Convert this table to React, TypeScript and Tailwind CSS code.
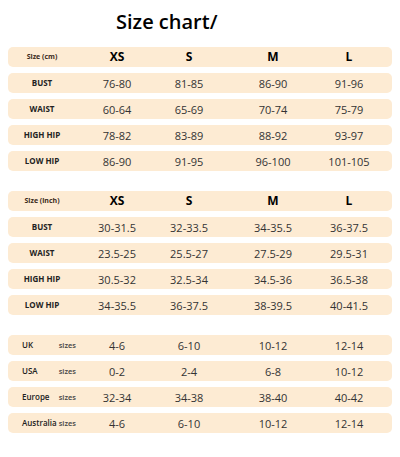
const cols = ['XS', 'S', 'M', 'L']

const cm: [string, string[]][] = [
  ['BUST', ['76-80', '81-85', '86-90', '91-96']],
  ['WAIST', ['60-64', '65-69', '70-74', '75-79']],
  ['HIGH HIP', ['78-82', '83-89', '88-92', '93-97']],
  ['LOW HIP', ['86-90', '91-95', '96-100', '101-105']],
]

const inch: [string, string[]][] = [
  ['BUST', ['30-31.5', '32-33.5', '34-35.5', '36-37.5']],
  ['WAIST', ['23.5-25', '25.5-27', '27.5-29', '29.5-31']],
  ['HIGH HIP', ['30.5-32', '32.5-34', '34.5-36', '36.5-38']],
  ['LOW HIP', ['34-35.5', '36-37.5', '38-39.5', '40-41.5']],
]

const regions: [string, string[]][] = [
  ['UK', ['4-6', '6-10', '10-12', '12-14']],
  ['USA', ['0-2', '2-4', '6-8', '10-12']],
  ['Europe', ['32-34', '34-38', '38-40', '40-42']],
  ['Australia', ['4-6', '6-10', '10-12', '12-14']],
]

const rowCls =
  'grid grid-cols-[68px_82px_62px_106px_46px] items-center h-[20px] rounded-[5px] bg-[#fdebd3]'

function HeaderRow({ unit }: { unit: string }) {
  return (
    <div className={rowCls}>
      <div className="text-center text-[7px] font-bold text-[#3a2a1a] whitespace-nowrap">{unit}</div>
      {cols.map(c => (
        <div key={c} className="text-center text-[12px] font-bold text-black leading-none">
          {c}
        </div>
      ))}
    </div>
  )
}

function ValueCells({ values }: { values: string[] }) {
  return (
    <>
      {values.map((v, i) => (
        <div key={i} className="text-center text-[11px] text-[#333] leading-none whitespace-nowrap">
          {v}
        </div>
      ))}
    </>
  )
}

function MeasureTable({ unit, rows }: { unit: string; rows: [string, string[]][] }) {
  return (
    <div className="flex flex-col gap-[6px]">
      <HeaderRow unit={unit} />
      {rows.map(([label, values]) => (
        <div key={label} className={rowCls}>
          <div className="text-center text-[8px] font-bold text-[#222] whitespace-nowrap">{label}</div>
          <ValueCells values={values} />
        </div>
      ))}
    </div>
  )
}

export default function App() {
  return (
    <div
      className="w-[400px] h-[457px] bg-white px-[8px] overflow-hidden"
      style={{ fontFamily: '"Open Sans", "Liberation Sans", sans-serif' }}
    >
      {/* Title */}
      <div className="pt-[8px] pl-[108px] h-[36px] text-[20px] leading-[28px] font-semibold text-black">
        Size chart/
      </div>

      <div className="mt-[11px] w-[384px]">
        <MeasureTable unit="Size (cm)" rows={cm} />

        <div className="mt-[20px]">
          <MeasureTable unit="Size (inch)" rows={inch} />
        </div>

        {/* Region sizes */}
        <div className="mt-[20px] flex flex-col gap-[6px]">
          {regions.map(([name, values]) => (
            <div key={name} className={rowCls}>
              <div className="flex items-baseline pl-[14px] whitespace-nowrap">
                <span className="w-[38px] text-[8px] font-semibold text-[#222]">{name}</span>
                <span className="text-[7.5px] font-semibold text-[#444]">sizes</span>
              </div>
              <ValueCells values={values} />
            </div>
          ))}
        </div>
      </div>
    </div>
  )
}
